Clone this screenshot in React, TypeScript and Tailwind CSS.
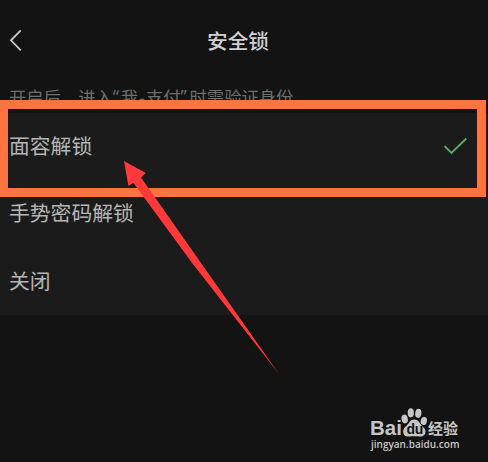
const options = [
  { label: '面容解锁', selected: true },
  { label: '手势密码解锁', selected: false },
  { label: '关闭', selected: false },
];

function Watermark() {
  return (
    <div className="absolute left-[371px] top-[407px] h-[43px] w-[90px] text-[#c6c6c6]">
      <svg className="absolute inset-0" width="90" height="43" viewBox="0 0 90 43" fill="currentColor">
        <ellipse cx="33.7" cy="12" rx="3.1" ry="4.4" transform="rotate(-12 33.7 12)" />
        <ellipse cx="39.8" cy="5.8" rx="3.1" ry="4.6" />
        <ellipse cx="47.3" cy="6.3" rx="3.1" ry="4.6" transform="rotate(8 47.3 6.3)" />
        <ellipse cx="52.8" cy="14" rx="3.1" ry="4.1" transform="rotate(12 52.8 14)" />
        <path d="M43.2 12.5C39.5 12.5 38.5 15.5 36 18.2C33.8 20.4 32 22 32.2 25C32.5 28.7 35 29.8 38 29.5C41 29.2 45.5 29.2 48.5 29.5C52 29.8 54.5 28 54.5 24.5C54.5 21.5 52 20.2 50.2 18C48.2 15.5 47.2 12.5 43.2 12.5Z" />
      </svg>
      <span className="absolute -left-px top-[11px] font-['Liberation_Sans',sans-serif] text-[20.5px] font-bold leading-[20px]">Bai</span>
      <span className="absolute left-[35.5px] top-[15px] font-['Liberation_Sans',sans-serif] text-[14px] font-bold leading-[15px] tracking-[-0.3px] text-[#131313]">du</span>
      <span className="absolute left-[57px] top-[12px] whitespace-nowrap font-['Noto_Sans_CJK_SC',sans-serif] text-[15px] font-bold leading-[18px]">经验</span>
      <span className="absolute left-0 top-[31px] whitespace-nowrap font-['Open_Sans',sans-serif] text-[10px] font-semibold leading-[12px]">jingyan.baidu.com</span>
    </div>
  );
}

export default function App() {
  return (
    <main className="relative h-[462px] w-[488px] overflow-hidden bg-[#131313] font-['Noto_Sans_CJK_SC',sans-serif]">
      <header className="grid h-[80px] grid-cols-[1fr_auto_1fr] items-center pl-[9px] pr-2">
        <svg width="14" height="24" viewBox="0 0 14 24" fill="none" stroke="#c9c9c9" strokeWidth="1.8">
          <path d="M11.8 2.3L2 12.3L11.8 22.3" />
        </svg>
        <h1 className="pr-[13px] text-[20.7px] font-medium leading-6 text-[#d0d0d0]">安全锁</h1>
      </header>
      <p className="flex h-[33px] items-center whitespace-nowrap pl-[9px] text-[17.3px] leading-[30px] text-[#6e6e6e]">
        <span>开启后，进入</span>
        <span className="w-[8px] font-['Noto_Sans',sans-serif]">“</span>
        <span>我</span>
        <span className="w-[8px] text-center">-</span>
        <span>支付</span>
        <span className="w-[9px] font-['Noto_Sans',sans-serif]">”</span>
        <span>时需验证身份</span>
      </p>
      <ul className="grid h-[202px] grid-rows-[65px_68px_69px] bg-[#1b1b1b] pl-[9px] pr-[20px]">
        {options.map((option) => (
          <li key={option.label} className="flex items-center justify-between pb-px text-[20.8px] leading-6 text-[#b5b5b5]">
            <span>{option.label}</span>
            {option.selected && (
              <svg width="25" height="20" viewBox="0 0 25 20" fill="none" stroke="#58aa69" strokeWidth="1.9">
                <path d="M1.5 11L8.5 18L23.3 3.5" />
              </svg>
            )}
          </li>
        ))}
      </ul>
      <div className="absolute left-0 top-[100px] h-[97px] w-[486px] border-[9px] border-l-8 border-[#ff7340]" />
      <svg className="absolute left-[124px] top-[161px]" width="156" height="214" viewBox="0 0 156 214">
        <path fill="#ff3939" d="M0 0L21.8 12L17 16.4L155 213L68.5 102.5L9.3 21.7L4.4 25Z" />
      </svg>
      <Watermark />
    </main>
  );
}
